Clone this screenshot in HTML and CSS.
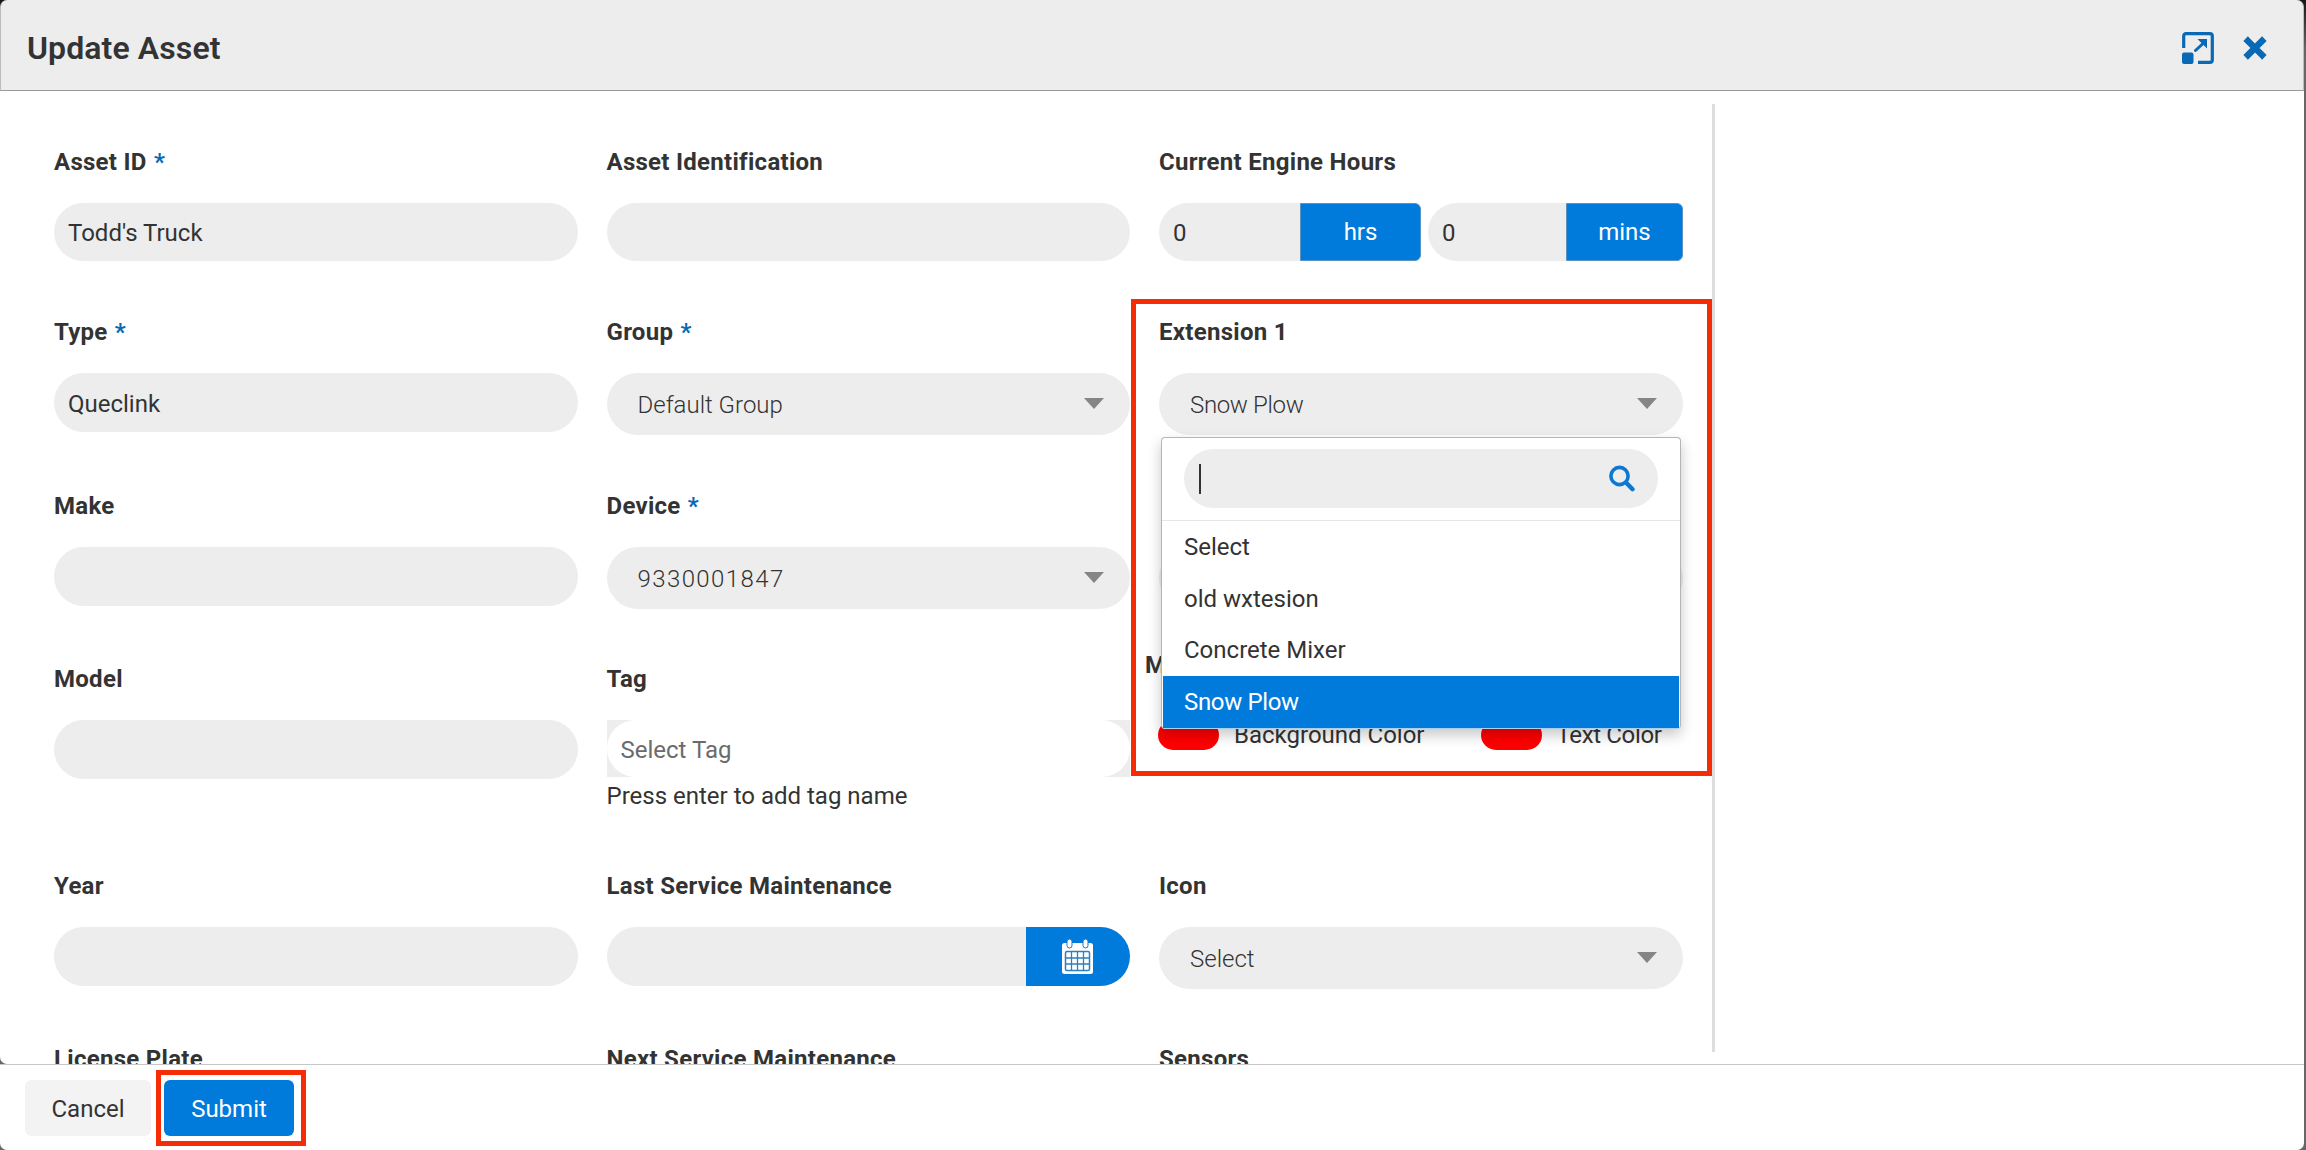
FILE: index.html
```
<!DOCTYPE html>
<html lang="en">
<head>
  <meta charset="UTF-8">
  <title>Update Asset</title>
  <link rel="stylesheet" href="styles.css">
</head>
<body>

<div class="modal">

  <!-- header -->
  <div class="modal-header">
    <h1>Update Asset</h1>
    <div class="header-icons">
      <svg width="32" height="32" viewBox="0 0 32 32">
        <path d="M1.700 16V4Q1.700 1.700 4 1.700H28Q30.300 1.700 30.300 4V28Q30.300 30.300 28 30.300H16" fill="none" stroke="#0a69b4" stroke-width="3.200"/>
        <rect x="0" y="20.500" width="11.500" height="11.500" rx="2" fill="#0a69b4"/>
        <path d="M13.500 18.500L21 11.500" stroke="#0a69b4" stroke-width="3" stroke-linecap="round"/>
        <path d="M15.500 7H25V16.500Z" fill="#0a69b4"/>
      </svg>
      <svg width="24" height="24" viewBox="0 0 24 24">
        <path d="M4.900 4.900L19.100 19.100M19.100 4.900L4.900 19.100" stroke="#0a69b4" stroke-width="6.400" stroke-linecap="square"/>
      </svg>
    </div>
  </div>

  <!-- form -->
  <div class="modal-body">
    <div class="form-grid">

      <div class="field">
        <label>Asset ID <span class="req">*</span></label>
        <input type="text" value="Todd's Truck">
      </div>
      <div class="field">
        <label>Asset Identification</label>
        <input type="text">
      </div>
      <div class="field">
        <label>Current Engine Hours</label>
        <div class="engine-hours">
          <div class="input-group hrs">
            <input type="text" value="0">
            <span class="addon">hrs</span>
          </div>
          <div class="input-group mins">
            <input type="text" value="0">
            <span class="addon">mins</span>
          </div>
        </div>
      </div>

      <div class="field">
        <label>Type <span class="req">*</span></label>
        <input type="text" class="tall" value="Queclink">
      </div>
      <div class="field">
        <label>Group <span class="req">*</span></label>
        <div class="select"><span>Default Group</span><i class="arrow"></i></div>
      </div>
      <div class="field extension">
        <label>Extension 1</label>
        <div class="select"><span class="tight">Snow Plow</span><i class="arrow"></i></div>
        <div class="dropdown">
          <div class="search">
            <div class="search-box">
              <i class="caret"></i>
              <svg width="27" height="27" viewBox="0 0 27 27">
                <circle cx="10.500" cy="11" r="8.600" fill="none" stroke="#0d78d4" stroke-width="3.600"/>
                <path d="M17.500 18L23.500 24.200" stroke="#0d78d4" stroke-width="4.400" stroke-linecap="round"/>
              </svg>
            </div>
          </div>
          <ul>
            <li>Select</li>
            <li>old wxtesion</li>
            <li>Concrete Mixer</li>
            <li class="active tight">Snow Plow</li>
          </ul>
        </div>
        <div class="highlight-box"></div>
      </div>

      <div class="field">
        <label>Make</label>
        <input type="text" class="tall">
      </div>
      <div class="field">
        <label>Device <span class="req">*</span></label>
        <div class="select"><span class="device-no">9330001847</span><i class="arrow"></i></div>
      </div>
      <div class="field">
        <label>&nbsp;</label>
        <div class="select"></div>
      </div>

      <div class="field">
        <label>Model</label>
        <input type="text" class="tall">
      </div>
      <div class="field">
        <label>Tag</label>
        <div class="tag-box"><input type="text" placeholder="Select Tag"></div>
        <p class="help">Press enter to add tag name</p>
      </div>
      <div class="field marker">
        <label>M</label>
        <div class="colors">
          <div class="color"><span class="swatch"></span><span>Background Color</span></div>
          <div class="color"><span class="swatch"></span><span class="tight">Text Color</span></div>
        </div>
      </div>

      <div class="field">
        <label>Year</label>
        <input type="text" class="tall">
      </div>
      <div class="field">
        <label>Last Service Maintenance</label>
        <div class="date-group">
          <input type="text" class="tall">
          <span class="date-btn">
            <svg width="32" height="36" viewBox="0 0 32 36">
              <rect x="0" y="4" width="31" height="31" rx="2.500" fill="#fff"/>
              <rect x="5" y="0" width="5" height="9" rx="2.500" fill="#fff" stroke="#007adb" stroke-width="1"/>
              <rect x="21" y="0" width="5" height="9" rx="2.500" fill="#fff" stroke="#007adb" stroke-width="1"/>
              <rect x="3.500" y="12.500" width="24" height="19" rx="1.500" fill="#fff" stroke="#2b7fc4" stroke-width="1.500"/>
              <path d="M9.500 13V31M15.500 13V31M21.500 13V31M4 19H27M4 25H27" stroke="#2b7fc4" stroke-width="1.300"/>
            </svg>
          </span>
        </div>
      </div>
      <div class="field">
        <label>Icon</label>
        <div class="select"><span>Select</span><i class="arrow"></i></div>
      </div>

      <div class="field"><label>License Plate</label></div>
      <div class="field"><label>Next Service Maintenance</label></div>
      <div class="field"><label>Sensors</label></div>

    </div>
    <div class="divider"></div>
  </div>

  <!-- footer -->
  <div class="modal-footer">
    <button class="btn cancel">Cancel</button>
    <div class="highlight-submit">
      <button class="btn submit">Submit</button>
    </div>
  </div>

</div>

</body>
</html>
```
FILE: styles.css
```
* {
  margin: 0;
  padding: 0;
  box-sizing: border-box;
}

body {
  width: 2306px;
  height: 1150px;
  overflow: hidden;
  background: linear-gradient(#15151a 0, #66666a 50px, #66666a 100%);
  font-family: Roboto, 'Liberation Sans', sans-serif;
  font-size: 24px;
  color: #333;
}

.modal {
  width: 2304px;
  height: 1150px;
  display: flex;
  flex-direction: column;
}

.modal-header {
  height: 91px;
  background: #ededed;
  border: 1px solid #999;
  border-top: none;
  border-right-color: #bbb;
  border-left-color: #bbb;
  border-radius: 7px 7px 0 0;
  display: flex;
  justify-content: space-between;
  align-items: center;
  padding: 6px 36px 0 26px;
}

h1 {
  font-size: 32px;
  font-weight: 600;
  line-height: 40px;
  letter-spacing: 0.1px;
}

.header-icons {
  display: flex;
  align-items: center;
  gap: 29px;
}

.header-icons svg {
  display: block;
}

/* form area */
.modal-body {
  height: 973px;
  background: #fff;
  display: flex;
  overflow: hidden;
  padding-left: 54px;
  border-radius: 0 0 0 7px;
}

.form-grid {
  display: grid;
  grid-template-columns: 523.500px 523.500px 524px;
  grid-template-rows: 170px 174px 173px 207px 173px 80px;
  column-gap: 29px;
  padding-top: 56px;
  width: 1629px;
  margin-right: 29px;
}

.field label {
  display: block;
  font-weight: 700;
  line-height: 30px;
  letter-spacing: 0.28px;
  margin-bottom: 26px;
  white-space: nowrap;
}

.req {
  color: #0a69b4;
  margin-left: 1px;
}

input {
  display: block;
  width: 100%;
  height: 58px;
  border: none;
  outline: none;
  background: #ededed;
  border-radius: 30px;
  padding: 2px 14px 0;
  font-family: inherit;
  font-size: 24px;
  color: #333;
}

input.tall {
  height: 59px;
}

input::placeholder {
  color: #6b6b6b;
}

.select {
  height: 62px;
  background: #ededed;
  border-radius: 31px;
  display: flex;
  justify-content: space-between;
  align-items: center;
  padding: 1px 26px 0 31px;
  font-weight: 300;
}

.arrow {
  border: 10px solid transparent;
  border-top: 11px solid #858585;
  border-bottom: none;
  margin-bottom: 3px;
}

.tight {
  letter-spacing: -0.35px;
}

.device-no {
  letter-spacing: 1.4px;
}

.engine-hours {
  display: flex;
  gap: 7px;
}

.input-group {
  display: flex;
  height: 58px;
}

.input-group input {
  border-radius: 30px 0 0 30px;
  flex: 1;
  min-width: 0;
}

.hrs {
  width: 262px;
}

.mins {
  width: 255px;
}

.addon {
  width: 121px;
  background: #007adb;
  border: 1px solid #5b93c4;
  border-radius: 0 6px 6px 0;
  color: #fff;
  text-align: center;
  line-height: 56px;
}

.mins .addon {
  width: 117px;
}

/* open select */
.extension {
  position: relative;
}

.dropdown {
  position: absolute;
  z-index: 2;
  top: 120px;
  left: 2px;
  width: 520px;
  height: 292px;
  background: #fff;
  border: 1px solid #b5b5b5;
  border-bottom-color: #a9d0ee;
  border-radius: 4px;
  box-shadow: 0 6px 14px rgba(0,0,0,0.22);
}

.search {
  height: 83px;
  padding: 11px 22px;
  border-bottom: 1px solid #e5e5e5;
}

.search-box {
  height: 59px;
  border-radius: 30px;
  background: #ededed;
  display: flex;
  justify-content: space-between;
  align-items: center;
  padding: 0 22px 0 15px;
}

.caret {
  width: 2px;
  height: 30px;
  background: #333;
}

.dropdown ul {
  list-style: none;
  padding: 0 1px;
}

.dropdown li {
  height: 51.700px;
  line-height: 53px;
  padding-left: 21px;
}

.dropdown .active {
  background: #007adb;
  color: #fff;
}

.highlight-box {
  position: absolute;
  z-index: 3;
  top: -18px;
  left: -28px;
  width: 581px;
  height: 477px;
  border: 5px solid #f52c06;
}

/* tags */
.tag-box {
  background: #ededed;
  height: 57px;
}

.tag-box input {
  background: #fff;
  height: 57px;
}

.help {
  line-height: 30px;
  margin-top: 4px;
}

/* marker colours */
.marker label {
  margin: -14px 0 0 -14px;
}

.colors {
  display: flex;
  gap: 56px;
  margin-top: 40px;
  margin-left: -1px;
  white-space: nowrap;
}

.color {
  display: flex;
  align-items: center;
  height: 30px;
}

.swatch {
  width: 61px;
  height: 30px;
  border-radius: 15px;
  background: #f00;
  margin-right: 15px;
}

.date-group {
  display: flex;
}

.date-group input {
  width: 419px;
  border-radius: 30px 0 0 30px;
}

.date-btn {
  width: 104.500px;
  height: 59px;
  background: #007adb;
  border-radius: 0 30px 30px 0;
  display: flex;
  justify-content: center;
  align-items: center;
}

.divider {
  width: 3px;
  height: 948px;
  margin-top: 13px;
  background: #ddd;
}

/* footer */
.modal-footer {
  flex: 1;
  background: #fff;
  border-top: 1px solid #c6c6c6;
  border-radius: 0 0 7px 7px;
  display: flex;
  align-items: flex-start;
  padding: 5px 0 0 25px;
}

.btn {
  height: 56px;
  border: none;
  border-radius: 6px;
  padding-top: 1px;
  font-family: inherit;
  font-size: 24px;
}

.cancel {
  width: 126px;
  margin-top: 10px;
  background: #f3f3f3;
  color: #333;
}

.highlight-submit {
  width: 150px;
  height: 76px;
  margin-left: 5px;
  border: 5px solid #f52c06;
  padding: 5px 0 0 3px;
}

.submit {
  width: 130px;
  background: #007adb;
  color: #fff;
}
```
